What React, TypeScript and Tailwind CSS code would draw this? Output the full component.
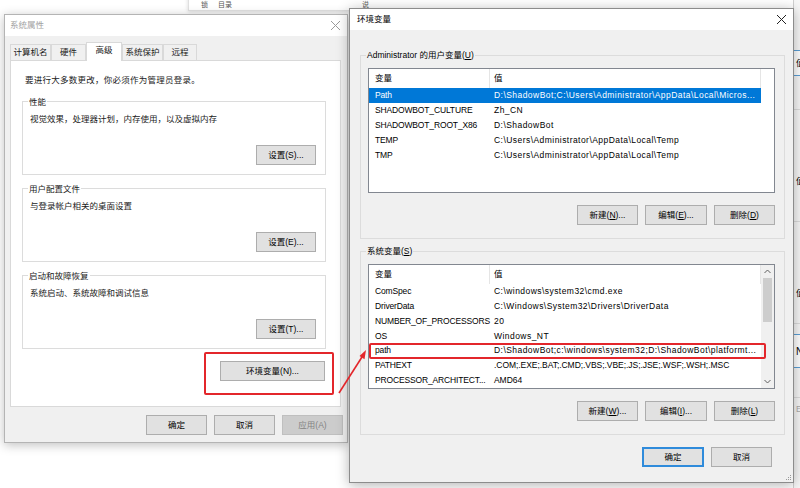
import React from "react";
import clsx from "clsx";

const font = "font-['Liberation_Sans','Noto_Sans_CJK_SC',sans-serif]";

const CloseX: React.FC<{ color: string }> = ({ color }) => (
    <svg width="11" height="11" viewBox="0 0 11 11">
        <path d="M1 1 L10 10 M10 1 L1 10" stroke={color} strokeWidth="1" />
    </svg>
);

interface BtnProps {
    children: React.ReactNode;
    w?: string;
    disabled?: boolean;
    primary?: boolean;
}

const Btn: React.FC<BtnProps> = ({ children, w = "w-[61px]", disabled, primary }) => (
    <div
        className={clsx(
            "h-[20px] flex items-center justify-center text-[8.5px] leading-none",
            w,
            disabled
                ? "bg-[#cccccc] border border-[#bfbfbf] text-[#838383]"
                : primary
                ? "bg-[#e1e1e1] border-2 border-[#2f8bdb] text-black"
                : "bg-[#e1e1e1] border border-[#adadad] text-black"
        )}
    >
        {children}
    </div>
);

const Mn: React.FC<{ k: string }> = ({ k }) => <span className="underline underline-offset-1">{k}</span>;

// group box on the white tab page
const PageGroup: React.FC<{ label: string; text: string; btn: React.ReactNode; className?: string }> = ({ label, text, btn, className }) => (
    <div className={clsx("relative border border-[#dcdcdc] h-[74px] w-[304px] flex flex-col", className)}>
        <span className="absolute -top-[7px] left-[5px] bg-white px-[1px] leading-[14px] text-[#1a1a1a]">{label}</span>
        <div className="ml-[7px] mt-[10px] leading-[14px] text-[#1a1a1a]">{text}</div>
        <div className="mt-auto mb-[9px] mr-[9px] flex justify-end">
            <Btn w="w-[60px]">{btn}</Btn>
        </div>
    </div>
);

// [name, value, tight] - tight rows keep normal spacing (all caps / punctuation)
type Row = [string, string, boolean?];

const ListView: React.FC<{ rows: Row[]; selected?: number; scroll?: boolean }> = ({ rows, selected, scroll }) => (
    <div className="h-[125px] w-[407px] border border-[#828790] bg-white flex">
        <div className="w-[392px] flex flex-col">
            <div className="h-[19px] flex items-center text-black">
                <div className="w-[121px] h-full flex items-center pl-[6px] border-r border-[#e5e5e5]">变量</div>
                <div className="w-[271px] h-full flex items-center pl-[4px] border-r border-[#e5e5e5]">值</div>
            </div>
            {rows.map(([k, v, tight], i) => (
                <div
                    key={k}
                    className={clsx(
                        "h-[15px] flex items-center whitespace-nowrap",
                        i === selected ? "bg-[#0078d7] text-white" : "text-black"
                    )}
                >
                    <div className="w-[121px] pl-[6px] tracking-[-0.15px]">{k}</div>
                    <div className={clsx("w-[271px] pl-[4px] overflow-hidden", tight ? "tracking-[-0.05px]" : "tracking-[0.45px]")}>{v}</div>
                </div>
            ))}
        </div>
        {scroll && (
            <div className="w-[13px] bg-[#f0f0f0] flex flex-col items-center">
                <svg width="9" height="12" viewBox="0 0 9 12" className="mt-[1px]">
                    <path d="M1.5 7 L4.5 4 L7.5 7" stroke="#606060" strokeWidth="1" fill="none" />
                </svg>
                <div className="w-[9px] h-[44px] bg-[#cdcdcd]" />
                <svg width="9" height="12" viewBox="0 0 9 12" className="mt-auto mb-[1px]">
                    <path d="M1.5 5 L4.5 8 L7.5 5" stroke="#606060" strokeWidth="1" fill="none" />
                </svg>
            </div>
        )}
    </div>
);

const EnvGroup: React.FC<{ label: React.ReactNode; rows: Row[]; selected?: number; scroll?: boolean; btns: React.ReactNode[]; className?: string }> = ({
    label,
    rows,
    selected,
    scroll,
    btns,
    className,
}) => (
    <div className={clsx("relative border border-[#dcdcdc] h-[184px] w-[425px] pl-[7px] pt-[12px]", className)}>
        <span className="absolute -top-[8px] left-[5px] bg-[#f0f0f0] px-[1px] leading-[15px] text-black">{label}</span>
        <ListView rows={rows} selected={selected} scroll={scroll} />
        <div className="mt-[12px] w-[407px] flex justify-end gap-[7px]">
            {btns.map((b, i) => (
                <Btn key={i} w={i === 1 ? "w-[62px]" : "w-[61px]"}>
                    {b}
                </Btn>
            ))}
        </div>
    </div>
);

const userRows: Row[] = [
    ["Path", "D:\\ShadowBot;C:\\Users\\Administrator\\AppData\\Local\\Micros..."],
    ["SHADOWBOT_CULTURE", "Zh_CN"],
    ["SHADOWBOT_ROOT_X86", "D:\\ShadowBot"],
    ["TEMP", "C:\\Users\\Administrator\\AppData\\Local\\Temp"],
    ["TMP", "C:\\Users\\Administrator\\AppData\\Local\\Temp"],
];

const sysRows: Row[] = [
    ["ComSpec", "C:\\windows\\system32\\cmd.exe"],
    ["DriverData", "C:\\Windows\\System32\\Drivers\\DriverData"],
    ["NUMBER_OF_PROCESSORS", "20"],
    ["OS", "Windows_NT"],
    ["path", "D:\\ShadowBot;c:\\windows\\system32;D:\\ShadowBot\\platformt..."],
    ["PATHEXT", ".COM;.EXE;.BAT;.CMD;.VBS;.VBE;.JS;.JSE;.WSF;.WSH;.MSC", true],
    ["PROCESSOR_ARCHITECT...", "AMD64", true],
];

const tabs = [
    { name: "计算机名", w: "w-[41px]" },
    { name: "硬件", w: "w-[35px]" },
    { name: "高级", w: "w-[36px]", active: true },
    { name: "系统保护", w: "w-[41px]" },
    { name: "远程", w: "w-[34px]" },
];

export default function App() {
    return (
        <div className={clsx("relative w-[800px] h-[488px] overflow-hidden bg-white text-[8.5px]", font)}>
            {/* window behind, top */}
            <div className="absolute left-[188px] -top-[30px] w-[640px] h-[41px] bg-white border border-[#e0e0e0] shadow-[0_1px_4px_rgba(0,0,0,0.15)] flex items-end pb-[1px] pl-[12px] gap-[10px] text-[#555] leading-[8px] text-[7px]">
                <span>锁</span>
                <span>目录</span>
                <span className="ml-[120px]">说</span>
            </div>

            {/* window behind, right edge */}
            <div className="absolute left-[793px] top-[0px] w-[40px] h-[488px] bg-[#f7f7f7] border-l border-[#d0d0d0] flex flex-col text-black">
                <div className="h-[50px]" />
                <div className="h-[26px] border-y border-[#5a9fd6] pl-[2px] flex items-center bg-white">值(</div>
                <div className="h-[34px] border-b border-[#dcdcdc]" />
                <div className="h-[60px]" />
                <div className="h-[22px] flex items-center pl-[2px]">值(</div>
                <div className="h-[30px] border-b border-[#dcdcdc]" />
                <div className="h-[60px]" />
                <div className="h-[22px] flex items-center pl-[2px]">值(</div>
                <div className="h-[20px] border-b border-[#dcdcdc]" />
                <div className="h-[10px]" />
                <div className="h-[34px] border-y border-[#5a9fd6] pl-[2px] flex items-center bg-white text-[10px]">N</div>
                <div className="h-[30px] border-b border-[#dcdcdc]" />
                <div className="h-[22px] flex items-center pl-[2px] text-[#aaa]">E</div>
            </div>

            {/* 系统属性 */}
            <div className="absolute left-[4px] top-[14px] w-[344px] border border-[#b4b4b4] bg-[#f0f0f0] shadow-[0_2px_10px_rgba(0,0,0,0.25)] flex flex-col">
                <div className="h-[21px] bg-white flex items-center justify-between pl-[5px] pr-[6px]">
                    <span className="text-[#a3a3a3]">系统属性</span>
                    <CloseX color="#9a9a9a" />
                </div>
                <div className="px-[5px] pt-[6px] pb-[7px] flex flex-col">
                    <div className="flex items-end h-[18px] relative z-10">
                        {tabs.map((t) => (
                            <div
                                key={t.name}
                                className={clsx(
                                    "flex justify-center border border-[#d9d9d9] text-[#1a1a1a]",
                                    t.w,
                                    t.active ? "h-[19px] -mb-[1px] bg-white border-b-0 pt-[1px]" : "h-[16px] bg-[#f0f0f0] border-b-0 items-center"
                                )}
                            >
                                {t.name}
                            </div>
                        ))}
                    </div>
                    <div className="h-[347px] w-[331px] bg-white border border-[#d9d9d9] pl-[11px] pt-[12px] flex flex-col">
                        <div className="ml-[3px] leading-[15px] text-[#1a1a1a] tracking-[0.25px]">要进行大多数更改，你必须作为管理员登录。</div>
                        <PageGroup className="mt-[13px]" label="性能" text="视觉效果，处理器计划，内存使用，以及虚拟内存" btn="设置(S)..." />
                        <PageGroup className="mt-[13px]" label="用户配置文件" text="与登录帐户相关的桌面设置" btn="设置(E)..." />
                        <PageGroup className="mt-[13px]" label="启动和故障恢复" text="系统启动、系统故障和调试信息" btn="设置(T)..." />
                        <div className="w-[303px] mt-[12px] flex justify-end">
                            <Btn w="w-[105px]">环境变量(N)...</Btn>
                        </div>
                    </div>
                    <div className="mt-[8px] flex justify-end gap-[7px] -mr-[1px]">
                        <Btn>确定</Btn>
                        <Btn>取消</Btn>
                        <Btn disabled>应用(A)</Btn>
                    </div>
                </div>
            </div>

            {/* 环境变量 */}
            <div className="absolute left-[349px] top-[8px] w-[445px] h-[475px] border border-[#8c8c8c] bg-[#f0f0f0] shadow-[0_2px_12px_rgba(0,0,0,0.3)] flex flex-col">
                <div className="h-[21px] bg-white flex items-center justify-between pl-[7px] pr-[6px]">
                    <span className="text-black">环境变量</span>
                    <CloseX color="#222" />
                </div>
                <div className="pl-[10px] pt-[25px] flex flex-col">
                    <EnvGroup
                        label={
                            <>
                                Administrator 的用户变量(<Mn k="U" />)
                            </>
                        }
                        rows={userRows}
                        selected={0}
                        btns={[
                            <>新建(<Mn k="N" />)...</>,
                            <>编辑(<Mn k="E" />)...</>,
                            <>删除(<Mn k="D" />)</>,
                        ]}
                    />
                    <EnvGroup
                        className="mt-[12px]"
                        label={
                            <>
                                系统变量(<Mn k="S" />)
                            </>
                        }
                        rows={sysRows}
                        scroll
                        btns={[
                            <>新建(<Mn k="W" />)...</>,
                            <>编辑(<Mn k="I" />)...</>,
                            <>删除(<Mn k="L" />)</>,
                        ]}
                    />
                    <div className="mt-[12px] w-[412px] flex justify-end gap-[7px]">
                        <Btn w="w-[62px]" primary>
                            确定
                        </Btn>
                        <Btn>取消</Btn>
                    </div>
                </div>
                <svg width="8" height="8" viewBox="0 0 8 8" className="absolute right-[1px] bottom-[1px]">
                    <rect x="6" y="2" width="1" height="1" fill="#999" />
                    <rect x="4" y="4" width="1" height="1" fill="#999" />
                    <rect x="6" y="4" width="1" height="1" fill="#999" />
                    <rect x="2" y="6" width="1" height="1" fill="#999" />
                    <rect x="4" y="6" width="1" height="1" fill="#999" />
                    <rect x="6" y="6" width="1" height="1" fill="#999" />
                </svg>
            </div>

            {/* red annotations */}
            <div className="absolute left-[204px] top-[352px] w-[130px] h-[43px] border-2 border-[#e3262b] rounded-[2px]" />
            <div className="absolute left-[369px] top-[343px] w-[397px] h-[16px] border-2 border-[#e3262b] rounded-[2px]" />
            <svg className="absolute left-0 top-0 pointer-events-none" width="800" height="488">
                <line x1="339" y1="393" x2="362" y2="357" stroke="#e3262b" strokeWidth="1.6" />
                <polygon points="366,350 359.5,356 364.5,359.3" fill="#e3262b" />
            </svg>
        </div>
    );
}
